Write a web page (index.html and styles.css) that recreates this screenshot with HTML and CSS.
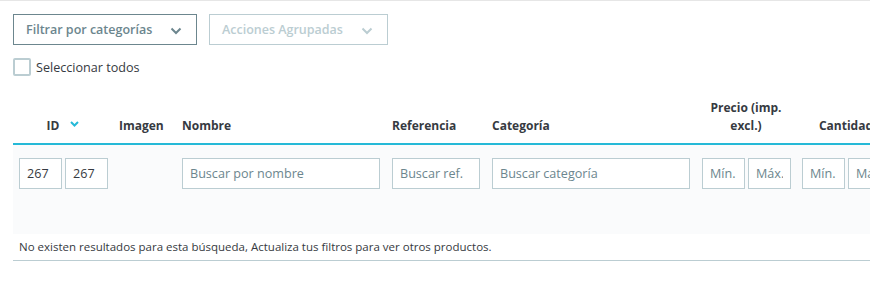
FILE: index.html
```html
<!DOCTYPE html>
<html lang="es">
<head>
    <meta charset="UTF-8">
    <meta name="viewport" content="width=device-width, initial-scale=1.0">
    <title>Productos</title>
    <link rel="stylesheet" href="styles.css">
</head>
<body>
    <div class="product-list">
        <div class="bulk-actions">
            <button class="dropdown-btn">
                Filtrar por categorías
                <svg class="caret" width="12" height="8" viewBox="0 0 12 8"><polyline points="1.5,1.5 6,6 10.5,1.5" fill="none" stroke="currentColor" stroke-width="2"/></svg>
            </button>
            <button class="dropdown-btn disabled">
                Acciones Agrupadas
                <svg class="caret" width="12" height="8" viewBox="0 0 12 8"><polyline points="1.5,1.5 6,6 10.5,1.5" fill="none" stroke="currentColor" stroke-width="2"/></svg>
            </button>
        </div>

        <label class="select-all">
            <span class="checkbox"></span>
            Seleccionar todos
        </label>

        <table class="product-table">
            <colgroup>
                <col style="width: 100px">
                <col style="width: 63px">
                <col style="width: 210px">
                <col style="width: 100px">
                <col style="width: 210px">
                <col style="width: 100px">
                <col style="width: 100px">
            </colgroup>
            <thead>
                <tr class="column-headers">
                    <th class="center">ID <svg class="sort" width="9" height="6" viewBox="0 0 9 6"><polyline points="1,1 4.5,4.5 8,1" fill="none" stroke="#25b9d7" stroke-width="2"/></svg></th>
                    <th>Imagen</th>
                    <th>Nombre</th>
                    <th>Referencia</th>
                    <th>Categoría</th>
                    <th class="center">Precio (imp.<br>excl.)</th>
                    <th class="center">Cantidad</th>
                </tr>
                <tr class="column-filters">
                    <td>
                        <div class="range">
                            <input type="text" value="267">
                            <input type="text" value="267">
                        </div>
                    </td>
                    <td></td>
                    <td><input type="text" placeholder="Buscar por nombre"></td>
                    <td><input type="text" placeholder="Buscar ref."></td>
                    <td><input type="text" placeholder="Buscar categoría"></td>
                    <td>
                        <div class="range">
                            <input type="text" placeholder="Mín.">
                            <input type="text" placeholder="Máx.">
                        </div>
                    </td>
                    <td>
                        <div class="range">
                            <input type="text" placeholder="Mín.">
                            <input type="text" placeholder="Máx.">
                        </div>
                    </td>
                </tr>
            </thead>
            <tbody>
                <tr>
                    <td class="empty" colspan="7">No existen resultados para esta búsqueda, Actualiza tus filtros para ver otros productos.</td>
                </tr>
            </tbody>
        </table>
    </div>
</body>
</html>
```

FILE: styles.css
```css
/* Product list page */
body {
    margin: 0;
    overflow: hidden;
    font-family: "Open Sans", "Liberation Sans", sans-serif;
    color: #363a41;
    background-color: #fff;
}

.product-list {
    border-top: 1px solid #e6e6e6;
    padding: 13px 0 0 13px;
}

.bulk-actions {
    display: flex;
    gap: 12px;
}

.dropdown-btn {
    display: flex;
    align-items: center;
    justify-content: space-between;
    height: 31px;
    padding: 0 14px 0 12px;
    border: 1px solid #6c868e;
    background-color: #fff;
    color: #6c868e;
    font-family: inherit;
    font-size: 12.5px;
    font-weight: 600;
    cursor: pointer;
}

.dropdown-btn:first-child {
    width: 184px;
}

.dropdown-btn.disabled {
    width: 179px;
    border-color: #bbcdd2;
    color: #bbcdd2;
    cursor: default;
}

.dropdown-btn .caret {
    margin-top: 2px;
}

.select-all {
    display: flex;
    align-items: center;
    gap: 5px;
    margin-top: 13px;
    font-size: 12.6px;
}

.checkbox {
    width: 14px;
    height: 14px;
    border: 2px solid #bbcdd2;
    border-radius: 2px;
}

.product-table {
    width: 883px;
    margin-top: 20px;
    border-collapse: collapse;
    table-layout: fixed;
}

.column-headers th {
    padding: 3px 6px 8px;
    font-size: 12px;
    font-weight: 700;
    line-height: 18px;
    text-align: left;
    vertical-align: bottom;
    border-bottom: 2px solid #25b9d7;
}

.column-headers th.center {
    text-align: center;
}

.column-headers .sort {
    margin-left: 8px;
    vertical-align: 3px;
}

.column-filters td {
    padding: 13px 6px 45px;
    background-color: #fafbfc;
    vertical-align: top;
}

.column-filters input {
    box-sizing: border-box;
    width: 100%;
    height: 31px;
    padding: 0 7px;
    border: 1px solid #bbcdd2;
    background-color: #fff;
    font-family: inherit;
    font-size: 12.6px;
    color: #363a41;
    outline: none;
}

.column-filters input::placeholder {
    color: #6c868e;
}

.range {
    display: flex;
    gap: 3px;
}

.range input {
    width: 43px;
    flex: none;
}

.empty {
    padding: 5px 6px 6px;
    font-size: 11.5px;
    border-bottom: 1px solid #bbcdd2;
}
```
